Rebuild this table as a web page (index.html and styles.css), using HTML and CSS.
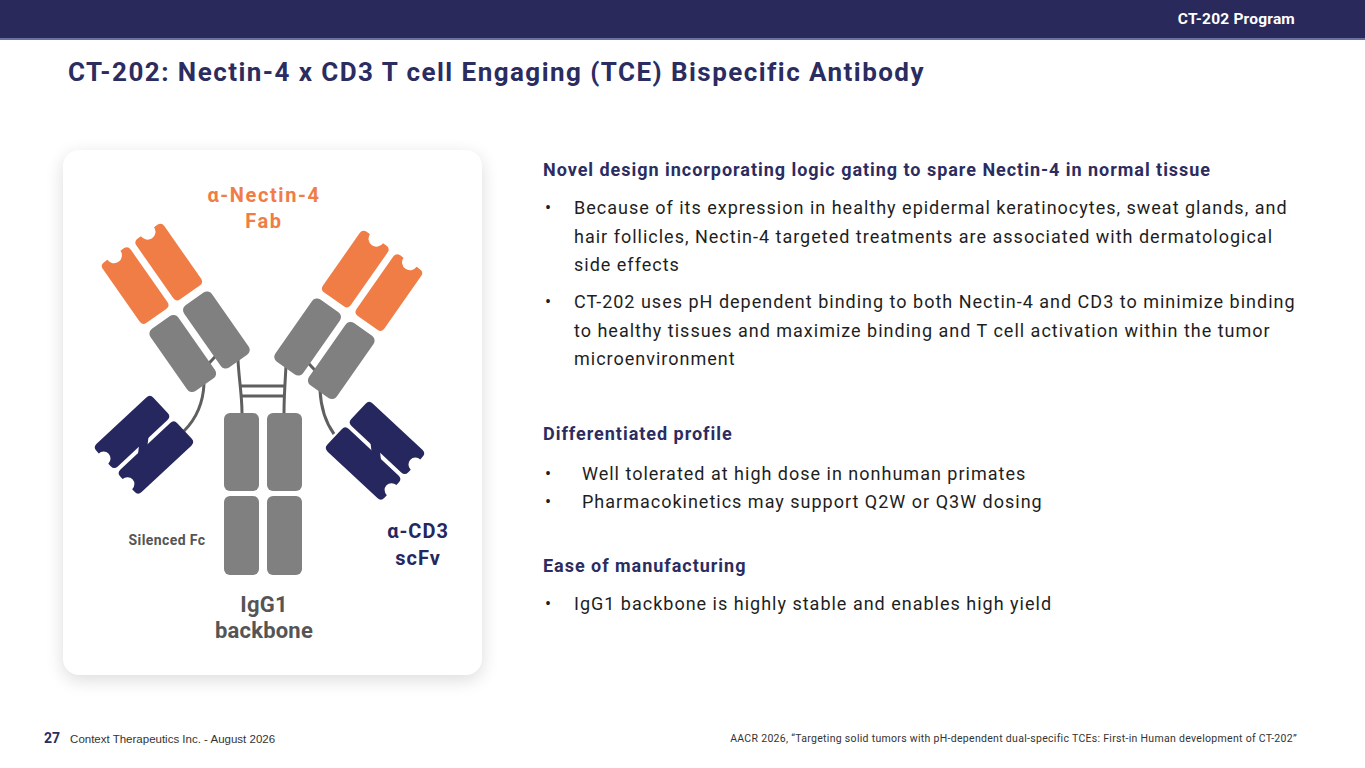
FILE: index.html
```html
<!DOCTYPE html>
<html lang="en">
<head>
<meta charset="utf-8">
<title>CT-202 Program</title>
<link rel="stylesheet" href="styles.css">
</head>
<body>
<header class="topbar"><span class="program">CT-202 Program</span></header>
<h1 class="title">CT-202: Nectin-4 x CD3 T cell Engaging (TCE) Bispecific Antibody</h1>
<main class="content">
  <section class="card">
    <svg class="diagram" width="419" height="525" viewBox="63 150 419 525" xmlns="http://www.w3.org/2000/svg">
      <defs>
        <path id="fabTip" d="M5,0 L9,0 A8,8 0 0 0 25,0 L29,0 Q34,0 34,5 L34,69 Q34,74 29,74 L5,74 Q0,74 0,69 L0,5 Q0,0 5,0 Z"/>
        <path id="scfvTip" d="M5,0 L26,0 Q31,0 31,5 L31,73 Q31,78 26,78 L22.5,78 A7,7 0 0 0 8.5,78 L5,78 Q0,78 0,73 L0,5 Q0,0 5,0 Z"/>
        <g id="fabArm">
          <line class="link" x1="33" y1="143" x2="42" y2="141"/>
          <use href="#fabTip" class="orange"/>
          <use href="#fabTip" class="orange" x="41"/>
          <rect class="grey" x="0" y="82" width="34" height="76" rx="6"/>
          <rect class="grey" x="41" y="82" width="34" height="76" rx="6"/>
        </g>
        <g id="scfv">
          <use href="#scfvTip" class="navy"/>
          <use href="#scfvTip" class="navy" x="35"/>
          <polygon class="navy" points="30,30 36,37 36,50 30,43"/>
        </g>
      </defs>

      <!-- linkers -->
      <path class="link" d="M238,360 C239,380 242,395 242,413"/>
      <path class="link" d="M286,366 C285,384 284,397 284,413"/>
      <line class="link" x1="240" y1="386" x2="285" y2="386"/>
      <line class="link" x1="241" y1="396" x2="284" y2="396"/>
      <path class="link" d="M204,384 C203,405 195,420 184,431"/>
      <path class="link" d="M320,390 C321,410 326,423 334,434"/>

      <!-- Fab arms -->
      <g transform="translate(100,265) rotate(-35)"><use href="#fabArm"/></g>
      <g transform="translate(524,7) scale(-1,1)"><g transform="translate(100,265) rotate(-35)"><use href="#fabArm"/></g></g>

      <!-- scFv -->
      <g transform="translate(150,394) rotate(47)"><use href="#scfv"/></g>
      <g transform="translate(519,6) scale(-1,1)"><g transform="translate(150,394) rotate(47)"><use href="#scfv"/></g></g>

      <!-- Fc -->
      <rect class="grey" x="224" y="413" width="35" height="78" rx="6"/>
      <rect class="grey" x="267" y="413" width="35" height="78" rx="6"/>
      <rect class="grey" x="224" y="496" width="35" height="79" rx="6"/>
      <rect class="grey" x="267" y="496" width="35" height="79" rx="6"/>

      <!-- labels -->
      <text class="lbl lbl-orange" x="264" y="202">α-Nectin-4</text>
      <text class="lbl lbl-orange" x="264" y="228">Fab</text>
      <text class="lbl-small" x="167" y="545">Silenced Fc</text>
      <text class="lbl lbl-navy" x="418" y="538">α-CD3</text>
      <text class="lbl lbl-navy" x="418" y="565">scFv</text>
      <text class="lbl lbl-grey" x="264" y="612">IgG1</text>
      <text class="lbl lbl-grey" x="264" y="638">backbone</text>
    </svg>
  </section>

  <section class="details">
    <div class="group group-design">
      <h2 class="heading">Novel design incorporating logic gating to spare Nectin-4 in normal tissue</h2>
      <ul class="bullets">
        <li><span class="dot">•</span><span class="txt">Because of its expression in healthy epidermal keratinocytes, sweat glands, and<br>hair follicles, Nectin-4 targeted treatments are associated with dermatological<br>side effects</span></li>
        <li class="spaced"><span class="dot">•</span><span class="txt">CT-202 uses pH dependent binding to both Nectin-4 and CD3 to minimize binding<br>to healthy tissues and maximize binding and T cell activation within the tumor<br>microenvironment</span></li>
      </ul>
    </div>
    <div class="group group-profile">
      <h2 class="heading">Differentiated profile</h2>
      <ul class="bullets bullets-wide">
        <li><span class="dot">•</span><span class="txt">Well tolerated at high dose in nonhuman primates</span></li>
        <li><span class="dot">•</span><span class="txt">Pharmacokinetics may support Q2W or Q3W dosing</span></li>
      </ul>
    </div>
    <div class="group group-mfg">
      <h2 class="heading">Ease of manufacturing</h2>
      <ul class="bullets">
        <li><span class="dot">•</span><span class="txt">IgG1 backbone is highly stable and enables high yield</span></li>
      </ul>
    </div>
  </section>
</main>
<footer class="footer">
  <div class="foot-left"><span class="page-no">27</span><span class="company">Context Therapeutics Inc. - August 2026</span></div>
  <div class="foot-right">AACR 2026, “Targeting solid tumors with pH-dependent dual-specific TCEs: First-in Human development of CT-202”</div>
</footer>
</body>
</html>
```

FILE: styles.css
```css
html, body {
  margin: 0;
  padding: 0;
}
body {
  width: 1365px;
  height: 768px;
  overflow: hidden;
  display: flex;
  flex-direction: column;
  background: #ffffff;
  font-family: Roboto, "Liberation Sans", sans-serif;
  color: #222;
}
.topbar {
  height: 38px;
  flex: none;
  background: #29295c;
  border-bottom: 2px solid #6d719f;
  display: flex;
  justify-content: flex-end;
  align-items: center;
  padding-right: 70px;
}
.program {
  color: #ffffff;
  font-weight: 700;
  font-size: 15.5px;
  letter-spacing: 0.2px;
}
.title {
  margin: 16px 0 0 68px;
  font-size: 26px;
  line-height: 32px;
  font-weight: 700;
  color: #2b2c5f;
  letter-spacing: 1.45px;
}
.content {
  display: flex;
  margin-top: 62px;
  padding-left: 63px;
}
.card {
  flex: none;
  width: 419px;
  height: 525px;
  border-radius: 16px;
  background: #ffffff;
  box-shadow: 0 5px 18px rgba(0, 0, 0, 0.14);
  overflow: hidden;
}
.diagram {
  display: block;
}
.orange { fill: #f07d45; }
.grey { fill: #808080; }
.navy { fill: #27275f; }
.link {
  fill: none;
  stroke: #5f5f5f;
  stroke-width: 3;
}
.lbl {
  font-family: Roboto, "Liberation Sans", sans-serif;
  font-weight: 700;
  font-size: 20px;
  text-anchor: middle;
  letter-spacing: 1.2px;
}
.lbl-orange { fill: #f07d45; letter-spacing: 1.6px; }
.lbl-navy { fill: #27275f; letter-spacing: 1px; }
.lbl-grey { fill: #555555; font-size: 22px; letter-spacing: 0.2px; }
.lbl-small {
  font-family: Roboto, "Liberation Sans", sans-serif;
  font-weight: 700;
  font-size: 14px;
  fill: #555555;
  text-anchor: middle;
  letter-spacing: 0.4px;
}
.details {
  margin-left: 61px;
  padding-top: 6px;
}
.heading {
  margin: 0;
  font-size: 18px;
  line-height: 28px;
  font-weight: 700;
  color: #2b2c5f;
  letter-spacing: 0.97px;
}
.bullets {
  list-style: none;
  margin: 10px 0 0 0;
  padding: 0;
}
.bullets li {
  display: flex;
  font-size: 18px;
  line-height: 28.5px;
  color: #1e1e1e;
  letter-spacing: 1px;
}
.bullets li.spaced {
  margin-top: 8.5px;
}
.dot {
  flex: none;
  width: 29px;
  padding-left: 2px;
  letter-spacing: 0;
}
.bullets-wide {
  margin-top: 12px;
}
.bullets-wide li {
  line-height: 28px;
}
.bullets-wide .dot {
  width: 37px;
}
.group-profile {
  margin-top: 46px;
}
.group-mfg {
  margin-top: 36px;
}
.footer {
  margin-top: auto;
  height: 20px;
  padding: 0 68px 20px 44px;
  display: flex;
  justify-content: space-between;
  align-items: center;
}
.foot-left {
  display: flex;
  align-items: baseline;
}
.page-no {
  font-family: Roboto, "Liberation Sans", sans-serif;
  font-weight: 700;
  font-size: 14px;
  color: #2b2c5f;
  margin-right: 10px;
}
.company {
  font-family: "Liberation Sans", Arial, sans-serif;
  font-size: 11.5px;
  color: #333333;
}
.foot-right {
  font-family: Roboto, "Liberation Sans", sans-serif;
  font-size: 10.5px;
  color: #333333;
  letter-spacing: 0.3px;
}
```
